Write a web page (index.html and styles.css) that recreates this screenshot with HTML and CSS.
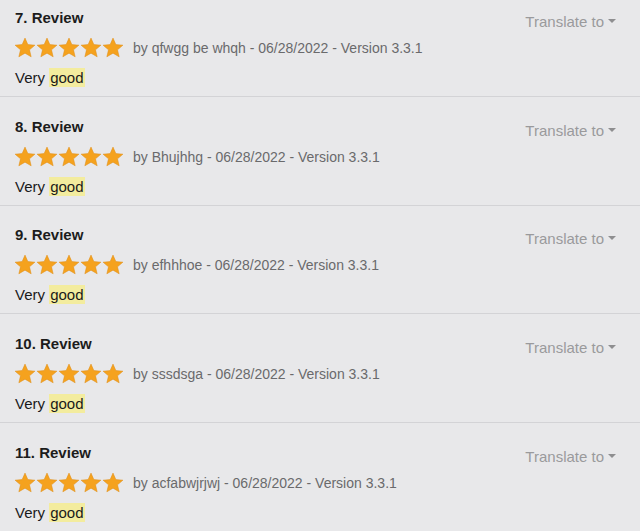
FILE: index.html
```html
<!DOCTYPE html>
<html>
<head>
<meta charset="utf-8">
<link rel="stylesheet" href="styles.css">
</head>
<body>
<svg width="0" height="0" class="defs">
  <defs>
    <symbol id="star" viewBox="0 0 24 24">
      <polygon points="12,1.2 15.1,8.3 22.8,8.9 16.9,14 18.7,21.6 12,17.6 5.3,21.6 7.1,14 1.2,8.9 8.9,8.3" fill="#f5a21e" stroke="#e0901a" stroke-width="0.6" stroke-linejoin="round"/>
    </symbol>
  </defs>
</svg>
<div class="list">
  <div class="review">
    <div class="head"><div class="title">7. Review</div><div class="translate">Translate to <span class="caret"></span></div></div>
    <div class="meta"><span class="stars"><svg class="s"><use href="#star"/></svg><svg class="s"><use href="#star"/></svg><svg class="s"><use href="#star"/></svg><svg class="s"><use href="#star"/></svg><svg class="s"><use href="#star"/></svg></span><span class="by">by qfwgg be whqh - 06/28/2022 - Version 3.3.1</span></div>
    <div class="body">Very <span class="hl">good</span></div>
  </div>
  <div class="review">
    <div class="head"><div class="title">8. Review</div><div class="translate">Translate to <span class="caret"></span></div></div>
    <div class="meta"><span class="stars"><svg class="s"><use href="#star"/></svg><svg class="s"><use href="#star"/></svg><svg class="s"><use href="#star"/></svg><svg class="s"><use href="#star"/></svg><svg class="s"><use href="#star"/></svg></span><span class="by">by Bhujhhg - 06/28/2022 - Version 3.3.1</span></div>
    <div class="body">Very <span class="hl">good</span></div>
  </div>
  <div class="review">
    <div class="head"><div class="title">9. Review</div><div class="translate">Translate to <span class="caret"></span></div></div>
    <div class="meta"><span class="stars"><svg class="s"><use href="#star"/></svg><svg class="s"><use href="#star"/></svg><svg class="s"><use href="#star"/></svg><svg class="s"><use href="#star"/></svg><svg class="s"><use href="#star"/></svg></span><span class="by">by efhhhoe - 06/28/2022 - Version 3.3.1</span></div>
    <div class="body">Very <span class="hl">good</span></div>
  </div>
  <div class="review">
    <div class="head"><div class="title">10. Review</div><div class="translate">Translate to <span class="caret"></span></div></div>
    <div class="meta"><span class="stars"><svg class="s"><use href="#star"/></svg><svg class="s"><use href="#star"/></svg><svg class="s"><use href="#star"/></svg><svg class="s"><use href="#star"/></svg><svg class="s"><use href="#star"/></svg></span><span class="by">by sssdsga - 06/28/2022 - Version 3.3.1</span></div>
    <div class="body">Very <span class="hl">good</span></div>
  </div>
  <div class="review">
    <div class="head"><div class="title">11. Review</div><div class="translate">Translate to <span class="caret"></span></div></div>
    <div class="meta"><span class="stars"><svg class="s"><use href="#star"/></svg><svg class="s"><use href="#star"/></svg><svg class="s"><use href="#star"/></svg><svg class="s"><use href="#star"/></svg><svg class="s"><use href="#star"/></svg></span><span class="by">by acfabwjrjwj - 06/28/2022 - Version 3.3.1</span></div>
    <div class="body">Very <span class="hl">good</span></div>
  </div>
</div>
</body>
</html>
```
FILE: styles.css
```css
html, body {
  margin: 0;
  padding: 0;
  background: #e8e8ea;
  overflow: hidden;
}
body {
  font-family: "Liberation Sans", Arial, sans-serif;
  color: #1a1a1a;
}
.defs {
  position: absolute;
  width: 0;
  height: 0;
}
.list {
  margin-top: -11.67px;
}
.review {
  box-sizing: border-box;
  height: 108.67px;
  padding: 19.67px 24px 0 15px;
  border-bottom: 1px solid #d3d3d6;
}
.head {
  display: flex;
  justify-content: space-between;
  align-items: flex-start;
}
.title {
  font-size: 15px;
  font-weight: bold;
  line-height: 20px;
  color: #1c1c1c;
}
.translate {
  margin-top: 4px;
  font-size: 15px;
  line-height: 20px;
  color: #9a9a9c;
  display: flex;
  align-items: center;
  gap: 4px;
}
.caret {
  display: inline-block;
  width: 0;
  height: 0;
  border-left: 4px solid transparent;
  border-right: 4px solid transparent;
  border-top: 4px solid #8e8e90;
  margin-top: -2px;
}
.meta {
  margin-top: 5px;
  height: 22px;
  display: flex;
  align-items: center;
}
.stars {
  display: flex;
  margin-left: -1px;
}
.s {
  width: 22px;
  height: 22px;
}
.by {
  margin-left: 9px;
  font-size: 14px;
  color: #6a6a6c;
}
.body {
  margin-top: 9px;
  font-size: 15px;
  line-height: 20px;
  color: #1a1a1a;
}
.hl {
  background: #f3ec9e;
  padding: 1px 1px;
}
```
